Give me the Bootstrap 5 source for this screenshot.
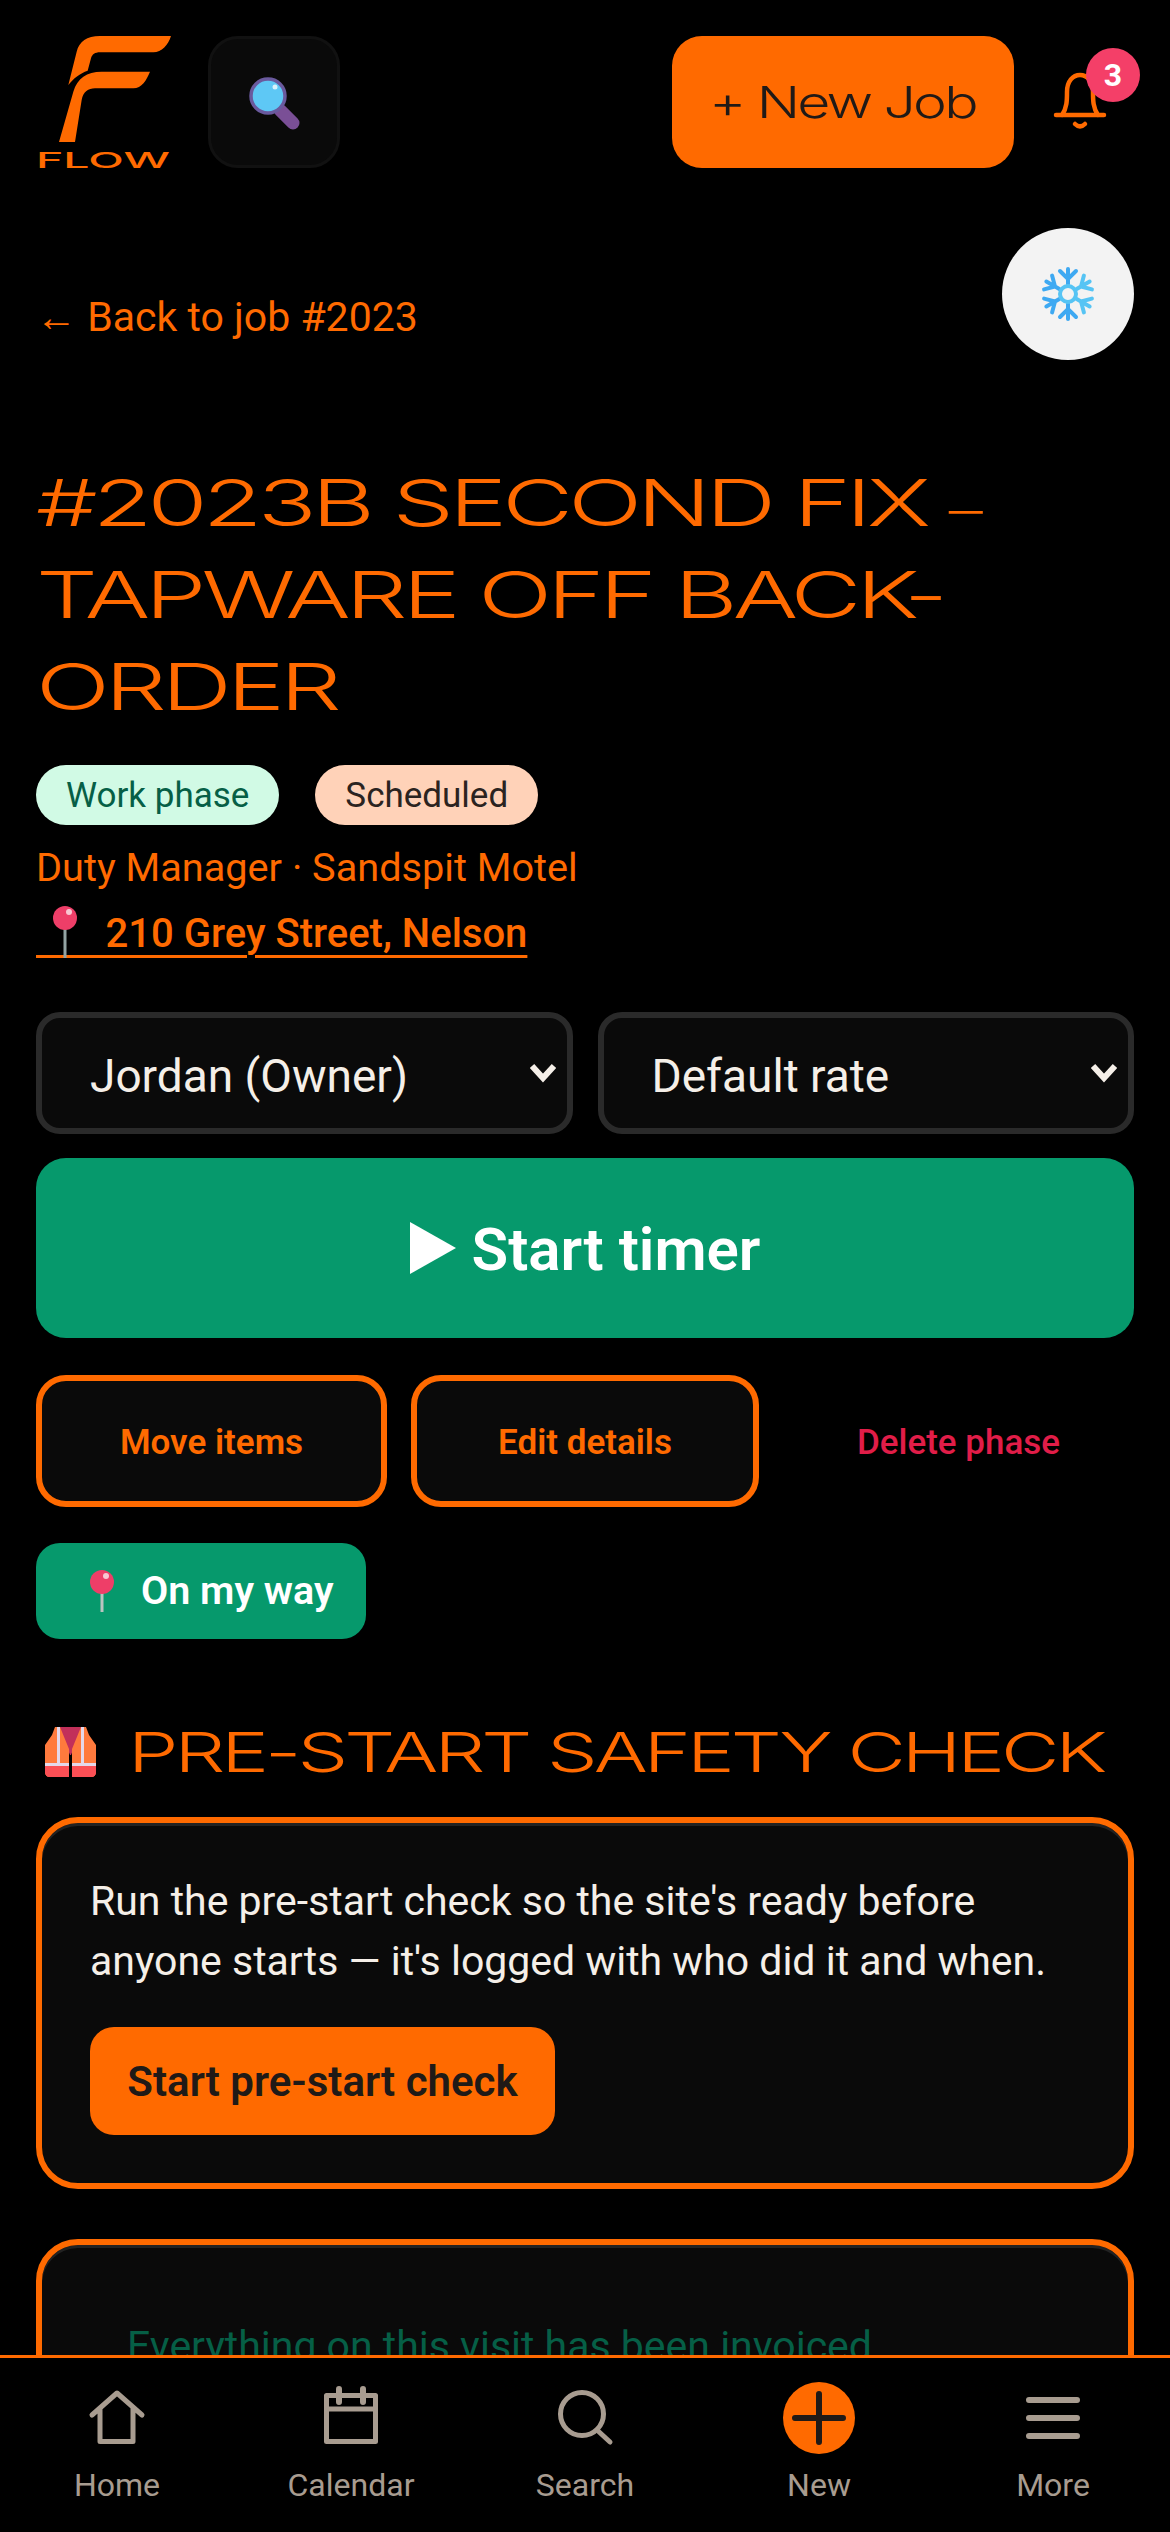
<!DOCTYPE html>
<html lang="en">
<head>
<meta charset="UTF-8">
<meta name="viewport" content="width=device-width, initial-scale=1.0">
<title>Flow - Job #2023B</title>
<link href="https://cdn.jsdelivr.net/npm/bootstrap@5.3.0/dist/css/bootstrap.min.css" rel="stylesheet">
<style>
html, body { height: 2532px; overflow: hidden; background: #000; }
body { font-family: Roboto, "Noto Sans", sans-serif; color: #f5efe8; font-size: 42px; }
.wide-font { font-family: Inter, "Liberation Sans", sans-serif; font-weight: 300; letter-spacing: -.05em; }
.wide-stretch { display: inline-block; white-space: nowrap; transform-origin: left center; }
.page-wrap { padding: 36px 36px 0; }
.top-bar { height: 132px; }
.logo-box { width: 135px; height: 132px; display: block; overflow: visible; }
.search-btn { width: 132px; height: 132px; margin-left: 37px; background: #0a0a0a; border: 3px solid #111; border-radius: 30px; }
.new-job { width: 342px; height: 132px; background: #ff6a00; color: #201a17; border-radius: 30px; font-size: 44px; border: 0; padding: 0 0 0 37px !important; text-align: left; }
.new-job .wide-stretch { transform: scaleX(1.3); }
.bell-wrap { width: 120px; height: 132px; position: relative; }
.bell-icon { position: absolute; left: 36px; top: 34px; }
.bell-count { position: absolute; left: 72px; top: 12px; width: 54px; height: 54px; border-radius: 50%; background: #f43f68; color: #fff; font-size: 32px; font-weight: 700; }
.back-row { height: 132px; margin-top: 60px; }
.back-link { color: #ff6a00; text-decoration: none; font-size: 41px; margin-top: 48px; }
.frost-btn { width: 132px; height: 132px; border-radius: 50%; background: #f3f3f3; }
.job-title { color: #ff6a00; font-size: 64px; line-height: 92px; margin: 97px 0 0; width: 722px; transform: scaleX(1.52); transform-origin: left top; }
.title-dash { font-size: .7em; line-height: 0; }
.pill-one, .pill-two { height: 60px; border-radius: 30px; font-size: 35px; padding: 0 30px; }
.pill-one { background: #d1fae5; color: #065f46; }
.pill-two { background: #ffd2b8; color: #2b2320; }
.pill-row { margin-top: 32px; gap: 36px; }
.client-line { color: #ff6a00; font-size: 39.700px; margin-top: 18px; line-height: 50px; }
.addr-link { color: #ff6a00; font-size: 40px; font-weight: 500; line-height: 50px; position: relative; display: inline-block; margin-top: 16px; text-underline-offset: 8px; text-decoration-thickness: 3px; }
.addr-pin { position: absolute; left: 17px; top: -3px; }
.select-row { margin-top: 48px; gap: 25px; }
.dark-select { height: 122px; background-color: #0a0a0a; color: #f5efe8; border: 6px solid #2a2a2a; border-radius: 24px; font-size: 46px; padding: 10px 48px 4px; background-size: 32px 24px; background-position: right 8px center;
  background-image: url("data:image/svg+xml,%3csvg xmlns='http://www.w3.org/2000/svg' viewBox='0 0 32 24'%3e%3cpath fill='none' stroke='%23f5efe8' stroke-width='6' d='M5 5l11 12L27 5'/%3e%3c/svg%3e"); }
.timer-btn { height: 180px; margin-top: 24px; background: #06996c; color: #fff; border: 0; border-radius: 30px; font-size: 60px; font-weight: 600; gap: 16px; }
.action-row { margin-top: 37px; gap: 24px; }
.line-btn { height: 132px; background: #0a0a0a; border: 6px solid #ff6a00; border-radius: 30px; color: #ff6a00; font-size: 35px; font-weight: 600; padding: 4px 0 0; }
.line-btn.move-btn { width: 351px; }
.line-btn.edit-btn { width: 348px; }
.del-btn { flex: 1; height: 132px; background: none; border: 0; color: #e11d48; font-size: 35px; font-weight: 500; padding: 4px 0 0; }
.way-btn { width: 330px; height: 96px; margin-top: 36px; background: #06996c; color: #fff; border: 0; border-radius: 24px; font-size: 39.500px; font-weight: 600; gap: 27px; padding: 0 0 0 54px; }
.safety-head { color: #ff6a00; font-size: 55px; margin: 83px 0 0; gap: 32px; line-height: 60px; padding-left: 9px; }
.safety-head .wide-stretch { transform: scaleX(1.46); }
.safety-card { margin-top: 35px; background: #0a0a0a; border: 6px solid #ff6a00; border-radius: 42px; box-shadow: inset 0 3px 0 #222; padding: 48px; }
.safety-card p { font-size: 41px; line-height: 60px; margin: 0; color: #f5efe8; }
.start-btn { width: 465px; height: 108px; margin-top: 36px; background: #ff6a00; color: #201a17; border: 0; border-radius: 24px; font-size: 42px; font-weight: 600; padding: 0; }
.invoice-card { margin-top: 50px; height: 400px; background: #0a0a0a; border: 6px solid #ff6a00; border-radius: 42px; box-shadow: inset 0 3px 0 #222; padding: 71px 85px; }
.invoice-note { color: #065f46; font-size: 41px; line-height: 60px; margin: 0; }
.tab-bar { position: fixed; left: 0; right: 0; top: 2355px; height: 177px; background: #000; border-top: 3px solid #ff6a00; }
.tab-item { flex: 1 1 0; color: #a89c90; font-size: 32px; text-decoration: none; padding-top: 24px; }
.tab-item svg { display: block; margin-bottom: 7px; }
</style>
</head>
<body>
<div class="page-wrap">

  <div class="top-bar d-flex align-items-center">
    <svg class="logo-box" viewBox="48 48 405 396" role="img" aria-label="Flow">
      <path fill="#ff6a00" d="M453 48H240C200 48 178 65 170 95L145 195C160 175 180 160 203 152L213 115C216 103 225 97 240 97H400C425 97 445 75 453 48Z"/>
      <path fill="#ff6a00" d="M390 155H245C200 155 172 175 160 215L117 366H165L185 240C190 215 205 205 225 205H340C365 205 380 180 390 155Z"/>
      <text x="48" y="443" fill="#ff6a00" font-family="Inter, sans-serif" font-weight="500" font-size="66" textLength="402" lengthAdjust="spacingAndGlyphs">FLOW</text>
    </svg>
    <button class="search-btn btn p-0 d-flex align-items-center justify-content-center" aria-label="Search">
      <svg width="60" height="60" viewBox="0 0 60 60">
        <path d="M36 38l13 13" stroke="#7a4f96" stroke-width="13" stroke-linecap="round"/>
        <circle cx="24" cy="24" r="17" fill="#5ec8f5" stroke="#6a5a9e" stroke-width="3.500"/>
        <circle cx="31" cy="15" r="2.500" fill="#d8f2fc"/>
      </svg>
    </button>
    <button class="new-job wide-font btn ms-auto"><span class="wide-stretch">+ New Job</span></button>
    <div class="bell-wrap">
      <svg class="bell-icon" width="60" height="60" viewBox="0 0 60 60" fill="none" stroke="#ff6a00" stroke-width="4.500" stroke-linecap="round" stroke-linejoin="round">
        <path d="M6 45H54M12 45C17 38 17 30 17 22C17 11 23 5 30 5C37 5 43 11 43 22C43 30 43 38 48 45"/>
        <path d="M25 54Q30 59 35 54"/>
      </svg>
      <span class="bell-count d-flex align-items-center justify-content-center">3</span>
    </div>
  </div>

  <div class="back-row d-flex justify-content-between align-items-center">
    <a class="back-link" href="#">← Back to job #2023</a>
    <button class="frost-btn btn p-0 d-flex align-items-center justify-content-center border-0" aria-label="Freeze">
      <svg width="56" height="56" viewBox="-28 -28 56 56" fill="none" stroke-width="4" stroke-linecap="round">
        <g stroke="#3ea9f2"><g id="arm"><path d="M0-10V-25M-8-23L0-15L8-23"/></g>
          <use href="#arm" transform="rotate(180)"/><use href="#arm" transform="rotate(240)"/><use href="#arm" transform="rotate(300)"/></g>
        <g stroke="#56c4f4"><use href="#arm" transform="rotate(60)"/><use href="#arm" transform="rotate(120)"/></g>
        <circle r="8" stroke="#56c4f4"/>
      </svg>
    </button>
  </div>

  <h1 class="job-title wide-font">#2023B SECOND FIX <span class="title-dash">–</span> TAPWARE OFF BACK-ORDER</h1>

  <div class="pill-row d-flex">
    <span class="pill-one badge fw-normal d-flex align-items-center">Work phase</span>
    <span class="pill-two badge fw-normal d-flex align-items-center">Scheduled</span>
  </div>
  <div class="client-line">Duty Manager · Sandspit Motel</div>
  <a class="addr-link" href="#">
    <svg class="addr-pin" width="24" height="54" viewBox="0 0 24 54">
      <rect x="10.500" y="22" width="3" height="30" fill="#93a3a3"/>
      <circle cx="12" cy="12" r="12" fill="#ee3e68"/>
      <circle cx="16" cy="6" r="3" fill="#f9c6d2"/>
    </svg>&nbsp;&nbsp;&nbsp;&nbsp;&nbsp;&nbsp;&nbsp;210 Grey Street, Nelson</a>

  <div class="select-row row g-0 d-flex flex-nowrap">
    <div class="col"><select class="form-select dark-select"><option>Jordan (Owner)</option></select></div>
    <div class="col"><select class="form-select dark-select"><option>Default rate</option></select></div>
  </div>

  <button class="timer-btn btn w-100 d-flex align-items-center justify-content-center">
    <svg width="46" height="52" viewBox="0 0 46 52"><path fill="#fff" d="M0 0L46 26L0 52Z"/></svg>
    <span class="pt-1">Start timer</span>
  </button>

  <div class="action-row d-flex">
    <button class="line-btn move-btn btn">Move items</button>
    <button class="line-btn edit-btn btn">Edit details</button>
    <button class="del-btn btn">Delete phase</button>
  </div>

  <button class="way-btn btn d-flex align-items-center">
    <svg width="24" height="42" viewBox="0 0 24 42">
      <rect x="10.500" y="20" width="3" height="22" fill="#b9c4c0"/>
      <circle cx="12" cy="12" r="12" fill="#ee3e68"/>
      <circle cx="16" cy="6" r="3" fill="#f9c6d2"/>
    </svg>
    On my way
  </button>

  <h2 class="safety-head wide-font d-flex align-items-center">
    <svg class="flex-shrink-0" width="51" height="50" viewBox="0 0 51 50">
      <path fill="#c2305a" d="M14 0H37L26 28H25Z"/>
      <path fill="#ff7a3d" d="M10 0H15L24 22V50H5Q0 50 0 45V18L7 8Z"/>
      <path fill="#ff7a3d" d="M41 0H36L27 22V50H46Q51 50 51 45V18L44 8Z"/>
      <path fill="#fb4f55" d="M0 39H24V50H5Q0 50 0 45ZM51 39H27V50H46Q51 50 51 45Z"/>
      <path fill="#e4d8ea" d="M12 0H15V36H12ZM36 0H39V36H36ZM0 36H24V39H0ZM27 36H51V39H27Z"/>
    </svg>
    <span class="wide-stretch">PRE-START SAFETY CHECK</span>
  </h2>

  <div class="safety-card card">
    <p>Run the pre-start check so the site's ready before anyone starts — it's logged with who did it and when.</p>
    <div><button class="start-btn btn">Start pre-start check</button></div>
  </div>

  <div class="invoice-card card">
    <p class="invoice-note">Everything on this visit has been invoiced</p>
  </div>
</div>

<nav class="tab-bar d-flex">
  <a class="tab-item d-flex flex-column align-items-center" href="#">
    <svg width="72" height="72" viewBox="0 0 72 72" fill="none" stroke="#a89c90" stroke-width="5" stroke-linecap="round" stroke-linejoin="round"><path d="M11 33L36 11L61 33M19 26V59.500H52V26"/></svg>
    Home
  </a>
  <a class="tab-item d-flex flex-column align-items-center" href="#">
    <svg width="72" height="72" viewBox="0 0 72 72" fill="none" stroke="#a89c90" stroke-width="5" stroke-linecap="round" stroke-linejoin="round"><rect x="11.500" y="13.500" width="49" height="46"/><path d="M11.500 27H60.500"/><path d="M24 7V20M48 7V20" stroke-width="6"/></svg>
    Calendar
  </a>
  <a class="tab-item d-flex flex-column align-items-center" href="#">
    <svg width="72" height="72" viewBox="0 0 72 72" fill="none" stroke="#a89c90" stroke-width="5" stroke-linecap="round"><circle cx="33" cy="32" r="21.500"/><path d="M48 48L61 60"/></svg>
    Search
  </a>
  <a class="tab-item d-flex flex-column align-items-center" href="#">
    <svg width="72" height="72" viewBox="0 0 72 72" fill="none"><circle cx="36" cy="36" r="36" fill="#ff6a00"/><path d="M36 12V60M12 36H60" stroke="#201a17" stroke-width="6" stroke-linecap="round"/></svg>
    New
  </a>
  <a class="tab-item d-flex flex-column align-items-center" href="#">
    <svg width="72" height="72" viewBox="0 0 72 72" fill="none" stroke="#a89c90" stroke-width="6" stroke-linecap="round"><path d="M12 18H60M12 36H60M12 54H60"/></svg>
    More
  </a>
</nav>

<script src="https://cdn.jsdelivr.net/npm/bootstrap@5.3.0/dist/js/bootstrap.bundle.min.js"></script>
</body>
</html>
